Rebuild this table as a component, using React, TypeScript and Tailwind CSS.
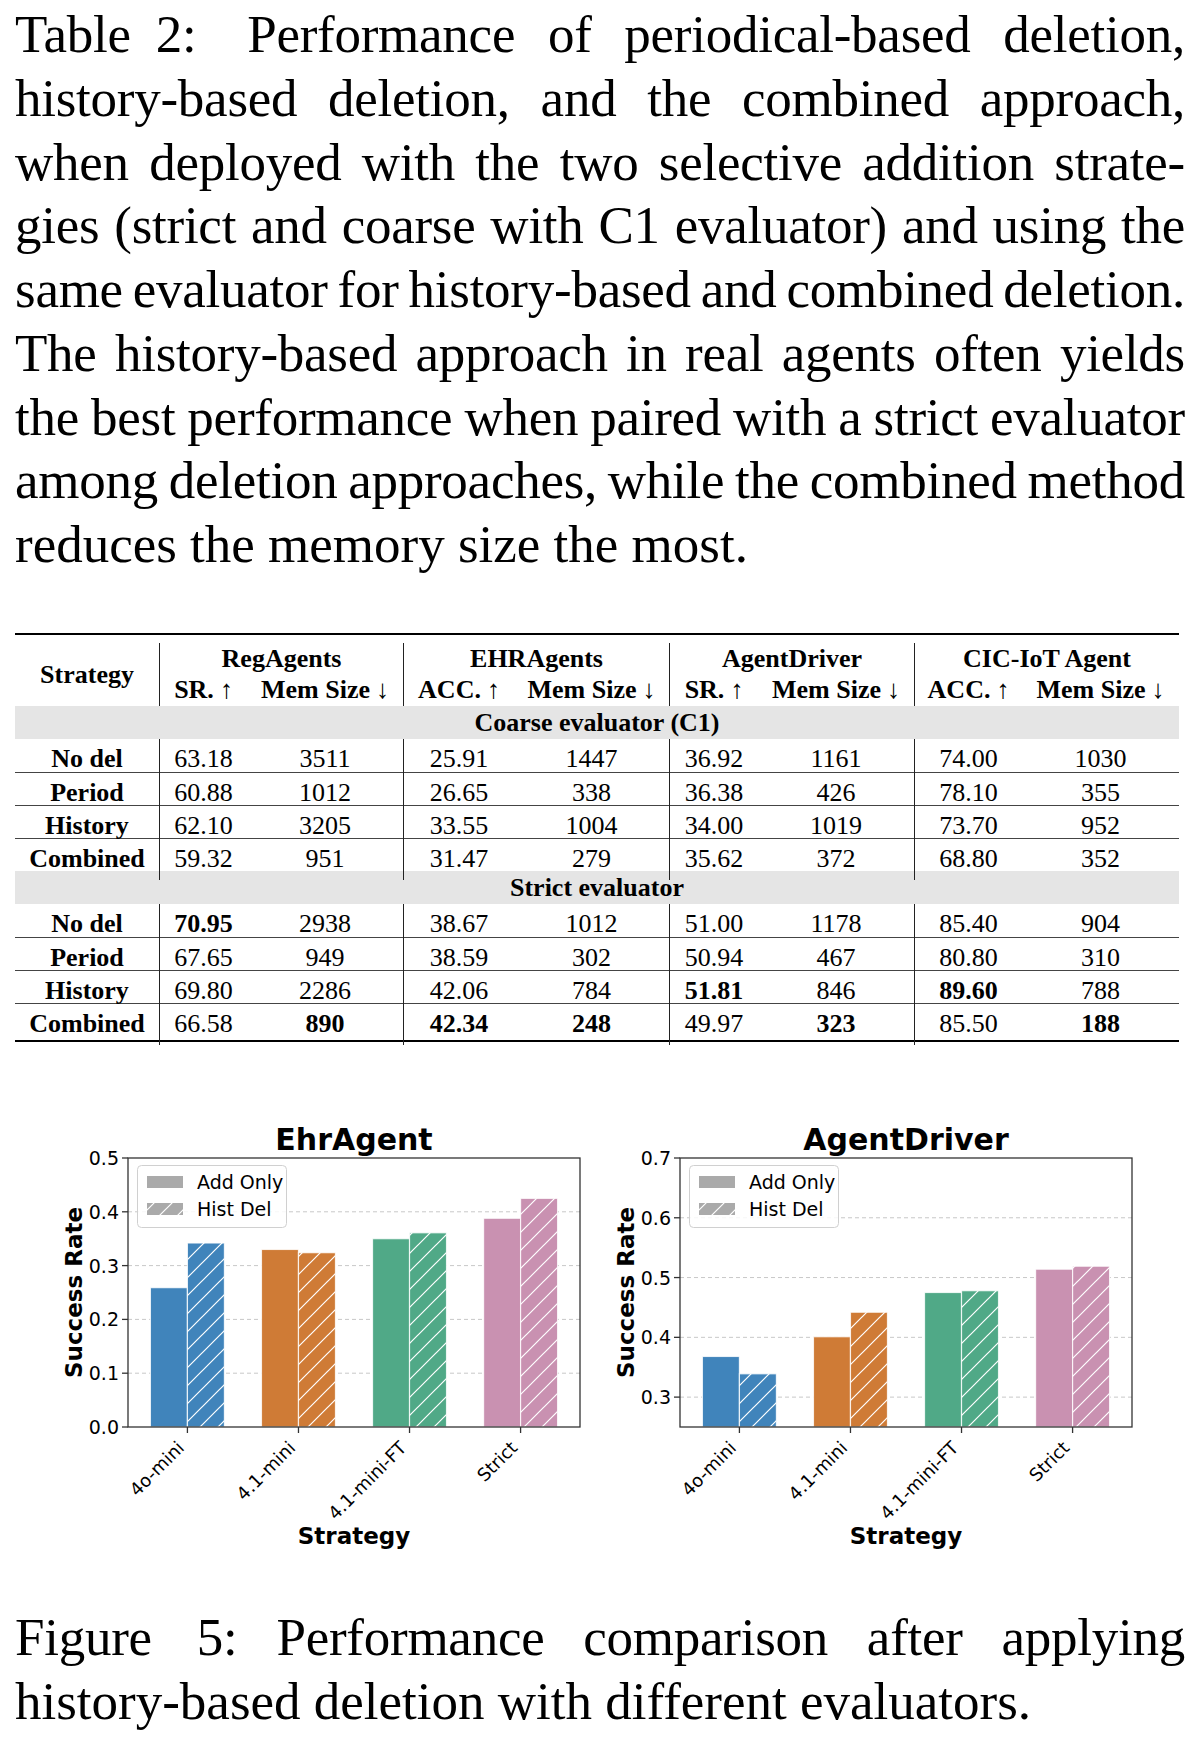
import React from "react";

const SERIF = "font-['Liberation_Serif','Times_New_Roman',serif]";

// table caption, one entry per printed line (last one is left aligned)
const TABLE_CAPTION = [
  "Performance of periodical-based deletion,",
  "history-based deletion, and the combined approach,",
  "when deployed with the two selective addition strate-",
  "gies (strict and coarse with C1 evaluator) and using the",
  "same evaluator for history-based and combined deletion.",
  "The history-based approach in real agents often yields",
  "the best performance when paired with a strict evaluator",
  "among deletion approaches, while the combined method",
];

const COLS = "grid grid-cols-[144px_88px_156px_111px_155px_89px_156px_108px_157px]";

const GROUPS = ["RegAgents", "EHRAgents", "AgentDriver", "CIC-IoT Agent"];
const SUBS = [
  ["SR.", "↑"],
  ["Mem Size", "↓"],
  ["ACC.", "↑"],
  ["Mem Size", "↓"],
  ["SR.", "↑"],
  ["Mem Size", "↓"],
  ["ACC.", "↑"],
  ["Mem Size", "↓"],
];

// "*" marks a bold value
const COARSE = [
  ["No del", "63.18", "3511", "25.91", "1447", "36.92", "1161", "74.00", "1030"],
  ["Period", "60.88", "1012", "26.65", "338", "36.38", "426", "78.10", "355"],
  ["History", "62.10", "3205", "33.55", "1004", "34.00", "1019", "73.70", "952"],
  ["Combined", "59.32", "951", "31.47", "279", "35.62", "372", "68.80", "352"],
];
const STRICT = [
  ["No del", "*70.95", "2938", "38.67", "1012", "51.00", "1178", "85.40", "904"],
  ["Period", "67.65", "949", "38.59", "302", "50.94", "467", "80.80", "310"],
  ["History", "69.80", "2286", "42.06", "784", "*51.81", "846", "*89.60", "788"],
  ["Combined", "66.58", "*890", "*42.34", "*248", "49.97", "*323", "85.50", "*188"],
];

const COLORS = ["#4084bb", "#cf7b36", "#50a987", "#c991b1"];
const LABELS = ["4o-mini", "4.1-mini", "4.1-mini-FT", "Strict"];

function Band({ label }: { label: string }) {
  return <div className="flex h-[33px] items-center justify-center bg-[#e5e5e5] font-bold">{label}</div>;
}

function Rows({ rows }: { rows: string[][] }) {
  return (
    <>
      {rows.map((row, r) => (
        <div key={row[0]} className={`${COLS} h-[33px] ${r > 0 ? "border-t border-[#444]" : ""}`}>
          {row.map((cell, c) => {
            const bold = c === 0 || cell.startsWith("*");
            return (
              <div
                key={c}
                className={`flex items-center justify-center pb-[2px] ${c % 2 === 1 ? "border-l border-[#222]" : ""} ${bold ? "font-bold" : ""}`}
              >
                {cell.replace("*", "")}
              </div>
            );
          })}
        </div>
      ))}
    </>
  );
}

function ResultsTable() {
  return (
    <div className={`ml-[15px] mt-[56px] w-[1164px] text-[26px] text-black ${SERIF}`}>
      <div className="h-[2px] bg-black" />
      <div className={`${COLS} mt-[8px] grid-rows-[31px_32px]`}>
        <div className="row-span-2 flex items-center justify-center font-bold">Strategy</div>
        {GROUPS.map((g) => (
          <div key={g} className="col-span-2 flex items-center justify-center border-l border-[#222] font-bold">
            {g}
          </div>
        ))}
        {SUBS.map(([name, arrow], i) => (
          <div
            key={i}
            className={`flex items-center justify-center gap-[6px] ${i % 2 === 0 ? "border-l border-[#222]" : ""}`}
          >
            <span className="font-bold">{name}</span>
            <span>{arrow}</span>
          </div>
        ))}
      </div>
      <Band label="Coarse evaluator (C1)" />
      <Rows rows={COARSE} />
      <Band label="Strict evaluator" />
      <Rows rows={STRICT} />
      <div className="mt-[4px] h-[2px] bg-black" />
    </div>
  );
}

type ChartProps = {
  id: string;
  title: string;
  yMin: number;
  yMax: number;
  ticks: number[];
  values: [number, number][];
};

function BarChart({ id, title, yMin, yMax, ticks, values }: ChartProps) {
  const X0 = 88;
  const X1 = 540;
  const Y0 = 57;
  const Y1 = 326;
  const unit = (X1 - X0) / 4.07;
  const cx = (i: number) => X0 + (i + 0.535) * unit;
  const y = (v: number) => Y1 - ((v - yMin) / (yMax - yMin)) * (Y1 - Y0);
  const BW = 37;
  const hatch = `${id}-hatch`;

  return (
    <svg
      width={550}
      height={470}
      viewBox="0 0 550 470"
      className="block shrink-0 font-['DejaVu_Sans','Liberation_Sans',sans-serif]"
    >
      <defs>
        <pattern id={hatch} patternUnits="userSpaceOnUse" width="18" height="18">
          <path d="M-4 4 L4 -4 M0 18 L18 0 M14 22 L22 14" stroke="#fff" strokeWidth="1.2" />
        </pattern>
      </defs>

      <text x={314} y={49} textAnchor="middle" fontSize="30" fontWeight="bold" fill="#000">
        {title}
      </text>

      {/* grid lines behind the bars */}
      {ticks
        .filter((t) => t > yMin && t < yMax)
        .map((t) => (
          <line
            key={t}
            x1={X0}
            x2={X1}
            y1={y(t)}
            y2={y(t)}
            stroke="#c8c8c8"
            strokeWidth="1"
            strokeDasharray="4 3"
          />
        ))}

      {values.map(([add, del], i) => {
        const c = cx(i);
        return (
          <g key={i}>
            <rect
              x={c - BW}
              y={y(add)}
              width={BW}
              height={Y1 - y(add)}
              fill={COLORS[i]}
              stroke="#fff"
              strokeOpacity="0.8"
              strokeWidth="1.2"
            />
            <rect x={c} y={y(del)} width={BW} height={Y1 - y(del)} fill={COLORS[i]} />
            <rect
              x={c}
              y={y(del)}
              width={BW}
              height={Y1 - y(del)}
              fill={`url(#${hatch})`}
              stroke="#fff"
              strokeOpacity="0.8"
              strokeWidth="1.2"
            />
          </g>
        );
      })}

      <rect x={X0} y={Y0} width={X1 - X0} height={Y1 - Y0} fill="none" stroke="#333" strokeWidth="1.3" />

      {ticks.map((t) => (
        <g key={t}>
          <line x1={X0 - 6} x2={X0} y1={y(t)} y2={y(t)} stroke="#333" strokeWidth="1.3" />
          <text x={79} y={y(t) + 7} textAnchor="end" fontSize="19" fill="#000">
            {t.toFixed(1)}
          </text>
        </g>
      ))}

      {LABELS.map((label, i) => {
        const c = cx(i);
        return (
          <g key={label}>
            <line x1={c} x2={c} y1={Y1} y2={Y1 + 6} stroke="#333" strokeWidth="1.3" />
            <text
              transform={`translate(${c - 2} ${Y1 + 22}) rotate(-45)`}
              textAnchor="end"
              fontSize="18"
              fill="#000"
            >
              {label}
            </text>
          </g>
        );
      })}

      {/* legend */}
      <rect x={97.5} y={64.5} width={149} height={62} rx={4} fill="#fff" fillOpacity="0.85" stroke="#d0d0d0" />
      <rect x={107} y={75} width={36} height={12} fill="#aaa" />
      <text x={157} y={88} fontSize="19" fill="#000">
        Add Only
      </text>
      <rect x={107} y={102} width={36} height={12} fill="#aaa" />
      <rect x={107} y={102} width={36} height={12} fill={`url(#${hatch})`} />
      <text x={157} y={115} fontSize="19" fill="#000">
        Hist Del
      </text>

      <text
        transform={`translate(42 ${(Y0 + Y1) / 2}) rotate(-90)`}
        textAnchor="middle"
        fontSize="23"
        fontWeight="bold"
        fill="#000"
      >
        Success Rate
      </text>
      <text x={314} y={443} textAnchor="middle" fontSize="23" fontWeight="bold" fill="#000">
        Strategy
      </text>
    </svg>
  );
}

// one justified caption line; the label keeps its own spacing
function JustifiedLine({ lead, leadClass, text }: { lead?: string; leadClass?: string; text: string }) {
  return (
    <div className="text-justify tracking-[-0.25px] [text-align-last:justify] [word-spacing:-5px]">
      {lead && <span className={`inline-block ${leadClass}`}>{lead}</span>}
      {lead && " "}
      {text}
    </div>
  );
}

export default function App() {
  return (
    <div className={`min-h-[1750px] w-[1192px] bg-white text-black ${SERIF}`}>
      <div className="ml-[15px] w-[1170px] pt-[3px] text-[53px] leading-[63.75px]">
        {TABLE_CAPTION.map((text, i) =>
          i === 0 ? (
            <JustifiedLine key={i} lead="Table 2:" leadClass="mr-[18px] [word-spacing:12px]" text={text} />
          ) : (
            <JustifiedLine key={i} text={text} />
          ),
        )}
        <div>reduces the memory size the most.</div>
      </div>

      <ResultsTable />

      <div className="mt-[59px] flex gap-[2px] pl-[40px]">
        <BarChart
          id="ehr"
          title="EhrAgent"
          yMin={0}
          yMax={0.5}
          ticks={[0, 0.1, 0.2, 0.3, 0.4, 0.5]}
          values={[
            [0.259, 0.342],
            [0.33, 0.324],
            [0.35, 0.361],
            [0.388, 0.425],
          ]}
        />
        <BarChart
          id="drv"
          title="AgentDriver"
          yMin={0.25}
          yMax={0.7}
          ticks={[0.3, 0.4, 0.5, 0.6, 0.7]}
          values={[
            [0.368, 0.339],
            [0.401, 0.442],
            [0.475, 0.478],
            [0.514, 0.519],
          ]}
        />
      </div>

      <div className="ml-[15px] mt-[35px] w-[1170px] text-[53px] leading-[63.75px]">
        <JustifiedLine lead="Figure 5:" leadClass="[word-spacing:32px]" text="Performance comparison after applying" />
        <div>history-based deletion with different evaluators.</div>
      </div>
    </div>
  );
}
